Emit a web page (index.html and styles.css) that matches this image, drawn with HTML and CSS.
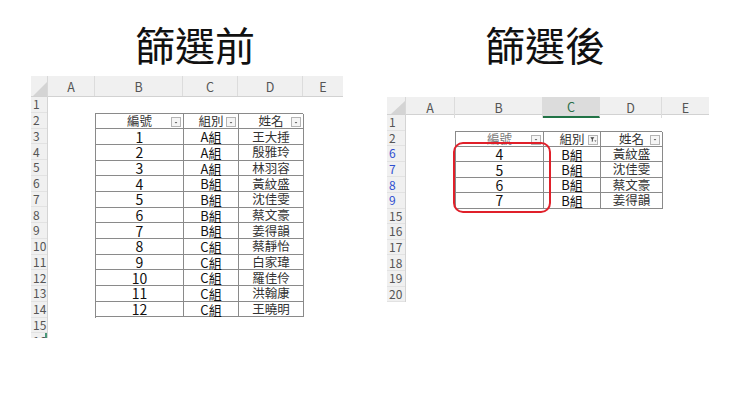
FILE: index.html
```html
<!DOCTYPE html>
<html lang="zh-Hant">
<head>
<meta charset="utf-8">
<link rel="stylesheet" href="styles.css">
</head>
<body>
<div class="page">
  <section class="panel panel-left">
    <h1 class="title title-left">篩選前</h1>
    <div class="sheet sheet-left">
      <div class="corner"><svg width="15" height="14" viewBox="0 0 15 14"><polygon points="15,0 15,14 1,14" fill="#d4d4d4"/></svg></div>
      <div class="colhdr">
        <div>A</div><div>B</div><div>C</div><div>D</div><div>E</div>
      </div>
      <div class="rowhdr">
        <div>1</div><div>2</div><div>3</div><div>4</div><div>5</div><div>6</div><div>7</div><div>8</div>
        <div>9</div><div>10</div><div>11</div><div>12</div><div>13</div><div>14</div><div>15</div><div class="sel">16</div>
      </div>
      <div class="body">
        <div class="tbl tbl-left">
          <div class="th">編號<span class="dd"><svg width="9" height="9" viewBox="0 0 9 9"><polygon points="3,4 6,4 4.5,5.5" fill="#555"/></svg></span></div>
          <div class="th">組別<span class="dd"><svg width="9" height="9" viewBox="0 0 9 9"><polygon points="3,4 6,4 4.5,5.5" fill="#555"/></svg></span></div>
          <div class="th">姓名<span class="dd"><svg width="9" height="9" viewBox="0 0 9 9"><polygon points="3,4 6,4 4.5,5.5" fill="#555"/></svg></span></div>
          <div class="num">1</div><div class="grp">A組</div><div class="nm">王大捶</div>
          <div class="num">2</div><div class="grp">A組</div><div class="nm">殷雅玲</div>
          <div class="num">3</div><div class="grp">A組</div><div class="nm">林羽容</div>
          <div class="num">4</div><div class="grp">B組</div><div class="nm">黃紋盛</div>
          <div class="num">5</div><div class="grp">B組</div><div class="nm">沈佳雯</div>
          <div class="num">6</div><div class="grp">B組</div><div class="nm">蔡文豪</div>
          <div class="num">7</div><div class="grp">B組</div><div class="nm">姜得韻</div>
          <div class="num">8</div><div class="grp">C組</div><div class="nm">蔡靜怡</div>
          <div class="num">9</div><div class="grp">C組</div><div class="nm">白家瑋</div>
          <div class="num">10</div><div class="grp">C組</div><div class="nm">羅佳伶</div>
          <div class="num">11</div><div class="grp">C組</div><div class="nm">洪翰康</div>
          <div class="num">12</div><div class="grp">C組</div><div class="nm">王曉明</div>
        </div>
      </div>
    </div>
  </section>

  <section class="panel panel-right">
    <h1 class="title title-right">篩選後</h1>
    <div class="sheet sheet-right">
      <div class="corner"><svg width="15" height="13" viewBox="0 0 15 13"><polygon points="15,0 15,13 1,13" fill="#d4d4d4"/></svg></div>
      <div class="colhdr">
        <div>A</div><div>B</div><div class="active">C</div><div>D</div><div>E</div>
      </div>
      <div class="rowhdr">
        <div>1</div><div>2</div><div class="blue">6</div><div class="blue">7</div><div class="blue">8</div><div class="blue">9</div>
        <div>15</div><div>16</div><div>17</div><div>18</div><div>19</div><div>20</div>
      </div>
      <div class="body">
        <div class="tbl tbl-right">
          <div class="th th-faded">編號<span class="dd"><svg width="9" height="9" viewBox="0 0 9 9"><polygon points="3,4 6,4 4.5,5.5" fill="#555"/></svg></span></div>
          <div class="th">組別<span class="dd"><svg width="9" height="9" viewBox="0 0 9 9"><polygon points="1.5,2 6,2 4.3,4.2 4.3,6.6 3.2,7.2 3.2,4.2" fill="#444"/><polygon points="6,5.5 8.4,5.5 7.2,6.9" fill="#444"/></svg></span></div>
          <div class="th">姓名<span class="dd"><svg width="9" height="9" viewBox="0 0 9 9"><polygon points="3,4 6,4 4.5,5.5" fill="#555"/></svg></span></div>
          <div class="num">4</div><div class="grp">B組</div><div class="nm">黃紋盛</div>
          <div class="num">5</div><div class="grp">B組</div><div class="nm">沈佳雯</div>
          <div class="num">6</div><div class="grp">B組</div><div class="nm">蔡文豪</div>
          <div class="num">7</div><div class="grp">B組</div><div class="nm">姜得韻</div>
        </div>
        <div class="highlight"></div>
      </div>
    </div>
  </section>
</div>
</body>
</html>
```

FILE: styles.css
```css
* { box-sizing: border-box; }
html, body { margin: 0; padding: 0; background: #ffffff; }
body {
  width: 740px;
  height: 416px;
  overflow: hidden;
  font-family: "Noto Sans CJK TC", "Noto Sans", sans-serif;
  color: #111;
}
.page {
  display: flex;
  align-items: flex-start;
}
.panel { display: flex; flex-direction: column; }
.panel-left { margin-left: 31px; width: 312px; }
.panel-right { margin-left: 44px; width: 322px; }

.title {
  margin: 24px 0 0 0;
  height: 40px;
  font-size: 40px;
  line-height: 40px;
  font-weight: 400;
  text-align: center;
  color: #111;
  letter-spacing: 0;
}
.title-left { padding-left: 16px; }
.title-right { padding-right: 6px; }

.sheet {
  display: grid;
  overflow: hidden;
  background: #fff;
}
.sheet-left {
  margin-top: 12px;
  grid-template-columns: 17px 295px;
  grid-template-rows: 21px 241px;
}
.sheet-right {
  margin-top: 33px;
  grid-template-columns: 19px 303px;
  grid-template-rows: 18px 187px;
}
.corner {
  background: #f0f0f0;
  border-bottom: 1px solid #d2d2d2;
  border-right: 1px solid #d8d8d8;
  display: flex;
  align-items: flex-end;
  justify-content: flex-end;
}
.corner svg { display: block; }

.colhdr {
  display: grid;
  background: #f0f0f0;
  border-bottom: 1px solid #d2d2d2;
  font-size: 12.5px;
  color: #555;
}
.sheet-left .colhdr { grid-template-columns: 47px 88px 55px 65px 40px; }
.sheet-right .colhdr { grid-template-columns: 49px 88px 57px 62px 47px; }
.colhdr div {
  display: flex;
  align-items: center;
  justify-content: center;
  border-right: 1px solid #dcdcdc;
}
.colhdr div:last-child { border-right: none; }
.colhdr .active {
  background: #dcdcdc;
  color: #2a6e48;
  border-bottom: 2px solid #217346;
}

.rowhdr {
  display: flex;
  flex-direction: column;
  background: #f0f0f0;
  border-right: 1px solid #d4d4d4;
  font-size: 12px;
  color: #555;
}
.sheet-left .rowhdr div { height: 15.75px; flex: none; }
.sheet-right .rowhdr div { height: 15.6px; flex: none; }
.rowhdr div {
  display: flex;
  align-items: center;
  padding-left: 2px;
  line-height: 1;
  border-bottom: 1px solid #e2e2e2;
}
.rowhdr .blue { color: #2f4fd1; }
.rowhdr .sel { box-shadow: inset -2px 0 0 #4a9a7a; }

.body {
  display: grid;
  position: relative;
}
.sheet-left .body {
  grid-template-columns: 47px 88px 55px 65px 40px;
  grid-template-rows: repeat(16, 15.75px);
}
.sheet-right .body {
  grid-template-columns: 49px 88px 57px 62px 47px;
  grid-template-rows: repeat(12, 15.6px);
}

.tbl {
  grid-column: 2 / 5;
  display: grid;
  border-top: 1px solid #8a8a8a;
  border-left: 1px solid #8a8a8a;
}
.tbl-left {
  grid-row: 2 / 15;
  grid-template-columns: 88px 55px 65px;
  grid-template-rows: repeat(13, 1fr);
}
.tbl-right {
  grid-row: 2 / 7;
  grid-template-columns: 88px 57px 62px;
  grid-template-rows: repeat(5, 1fr);
}
.tbl > div {
  border-right: 1px solid #8a8a8a;
  border-bottom: 1px solid #8a8a8a;
  display: flex;
  align-items: center;
  justify-content: center;
  line-height: 1;
  white-space: nowrap;
}
.tbl .th {
  position: relative;
  font-size: 12.5px;
  color: #333;
  background: #fff;
}
.tbl .th-faded { color: #777; }
.num { font-size: 14px; color: #111; }
.grp { font-size: 13px; color: #111; }
.nm { font-size: 12.5px; color: #333; }

.dd {
  position: absolute;
  right: 2px;
  bottom: 1px;
  width: 10px;
  height: 10px;
  border: 1px solid #b4b4b4;
  background: #f5f5f5;
  display: flex;
  align-items: center;
  justify-content: center;
}
.dd svg { display: block; }

.highlight {
  position: absolute;
  left: 47px;
  top: 27px;
  width: 98px;
  height: 71px;
  border: 2px solid #e0202a;
  border-radius: 10px;
  pointer-events: none;
}
```
